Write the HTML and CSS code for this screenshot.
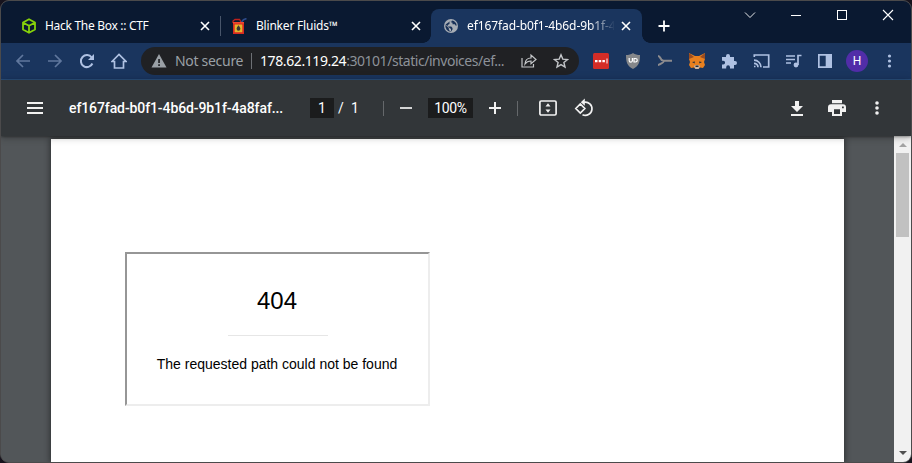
FILE: index.html
```html
<!DOCTYPE html>
<html lang="en">
<head>
<meta charset="utf-8">
<title>Browser window</title>
<link rel="stylesheet" href="styles.css">
</head>
<body>
<div class="window">
  <header class="tabs">
    <div class="tab tab-first">
      <svg class="favicon" viewBox="0 0 16 16" fill="none" stroke="#86d10a" stroke-width="1.8" stroke-linejoin="round"><path d="M8 1.2 14 4.5v7L8 14.8 2 11.500v-7zM2.300 4.700 8 7.800l5.700-3.100M8 7.800v6.700"/></svg>
      <span class="tab-title t-first">Hack The Box :: CTF</span>
      <svg class="close" viewBox="0 0 10 10"><path d="m1 1 8 8m0-8-8 8"/></svg>
    </div>
    <div class="tab tab-second">
      <svg class="favicon" viewBox="0 0 16 16"><path d="M2 5V3l2-1.500h4.500L10 4" fill="none" stroke="#bd211d" stroke-width="1.300"/><path d="m10.500 4 2-2.300 3-1.200" fill="none" stroke="#2d4c8c" stroke-width="1.600"/><path d="M2 4h11v12H2z" fill="#d82a20"/><path d="M2 4h11v1.500H2z" fill="#f04a30"/><path d="M3.700 6.500h7.600v7.700H3.700z" fill="#e3b52c"/><path d="M7.500 7.200c.9 1.300 1.900 2.300 1.900 3.600a1.900 1.900 0 0 1-3.800 0c0-1.300 1-2.300 1.900-3.600z" fill="#3b3834"/></svg>
      <span class="tab-title t-second">Blinker Fluids™</span>
      <svg class="close" viewBox="0 0 10 10"><path d="m1 1 8 8m0-8-8 8"/></svg>
    </div>
    <div class="tab tab-active">
      <svg class="favicon" viewBox="0 0 16 16"><circle cx="8" cy="8" r="7" fill="#a7adb5"/><path d="M8.500 2.300 6.500 4v2L4.700 7v1.500h3.500l1.300 1.400v1.600L8 13.700A5.700 5.700 0 0 1 2.400 7l3.400 3v1.500l1 1.500 1.200.2v-2.300L6 9.600 2.500 6.500M9 2.400 8 4.200l1.500.6v1.500h2.300l1 1.400.9-.3A5.800 5.800 0 0 0 9 2.400z" fill="#1a3258"/></svg>
      <span class="tab-title t-active">ef167fad-b0f1-4b6d-9b1f-4</span>
      <svg class="close" viewBox="0 0 10 10"><path d="m1 1 8 8m0-8-8 8"/></svg>
    </div>
    <svg class="new-tab" viewBox="0 0 12 12"><path d="M6 .5v11M.5 6h11" stroke="#fff" stroke-width="1.800"/></svg>
    <div class="controls">
      <svg viewBox="0 0 12 12" class="chevron"><path d="m1 3.500 5 5 5-5"/></svg>
      <svg viewBox="0 0 12 12" class="crisp"><path d="M1 6.500h10"/></svg>
      <svg viewBox="0 0 12 12" class="crisp"><path d="M1.500 1.500h9v9h-9z"/></svg>
      <svg viewBox="0 0 12 12"><path d="m1 1 10 10m0-10L1 11"/></svg>
    </div>
  </header>

  <nav class="toolbar">
    <div class="cell dim"><svg viewBox="0 0 16 16"><path d="M15 8H2m6-6L2 8l6 6" class="line"/></svg></div>
    <div class="cell dim"><svg viewBox="0 0 16 16"><path d="M1 8h13M8 2l6 6-6 6" class="line"/></svg></div>
    <div class="cell"><svg viewBox="0 0 16 16"><path d="M13.400 10.500a6 6 0 1 1-.7-6" class="line thick"/><path d="M15 1v6H9z" fill="currentColor"/></svg></div>
    <div class="cell"><svg viewBox="0 0 16 16"><path d="M1 8.500 8 1.500l7 7h-2.500V15h-9V8.500z" class="line"/></svg></div>
    <div class="omnibox">
      <svg class="warn" viewBox="0 0 16 14"><path fill="#9aa0a6" d="M8 0 15.500 13.500H.5z"/><path fill="#202124" d="M7.200 5h1.700v4H7.200zm0 5.200h1.700v1.700H7.200z"/></svg>
      <span class="insecure">Not secure</span>
      <i class="divider"></i>
      <span class="url"><b>178.62.119.24</b>:30101/static/invoices/ef...</span>
      <svg class="share" viewBox="0 0 16 16"><path d="M1 5v9h11.500v-3M4 11c.3-4 2.500-6 6-6V2l5 4.500-5 4.300V8c-2.600 0-4.500.8-6 3z"/></svg>
      <svg class="star" viewBox="0 0 16 16"><path d="m8 1.800 1.800 4.300 4.700.4-3.600 3 1.100 4.600L8 11.600l-4 2.500 1.100-4.600-3.600-3 4.700-.4z"/></svg>
    </div>
    <div class="cell"><svg viewBox="0 0 16 16"><path d="M1.500 0h13q1.500 0 1.500 1.500v13q0 1.500-1.500 1.500h-13Q0 16 0 14.500v-13Q0 0 1.500 0z" fill="#d32d27"/><path d="M2 7h2.500v2.300H2zm3.700 0h2.500v2.300H5.700zm3.700 0h2.500v2.300H9.400zM13.500 5.500h1v5h-1z" fill="#fff"/></svg></div>
    <div class="cell"><svg viewBox="0 0 16 16"><path d="M8 0c2 1.400 4.500 2 7 2 0 7-1 11-7 14C2 13 1 9 1 2c2.500 0 5-.6 7-2z" fill="#85878a"/><path d="M4.200 5v2.500a1.600 1.600 0 0 0 3.200 0V5M9 5.500h1.500a1.700 1.700 0 0 1 0 3.500H9z" fill="none" stroke="#fff" stroke-width="1.200"/></svg></div>
    <div class="cell"><svg viewBox="0 0 16 16"><path d="M1 3c3 0 2 4.500 5 4.500S3 12 1 12M6 7.700h9" fill="none" stroke="#8c8b8e" stroke-width="2"/></svg></div>
    <div class="cell"><svg viewBox="0 0 16 16"><path d="m0 0 6 3h4l6-3v6l-1 3 1 3-2 3-3-.5L9.500 16h-3L5 14.500 2 15l-2-3 1-3-1-3z" fill="#e8801f"/><path d="m0 0 5 4-5 2zM16 0l-5 4 5 2z" fill="#984c21"/><path d="m3 9 3-.5-.5 2zM13 9l-3-.5.500 2z" fill="#25303d"/><path d="m5 13 1.500-1h3l1.500 1-1.500 3h-3z" fill="#c9b9ac"/><path d="M6.500 12.500h3V14h-3z" fill="#262b33"/></svg></div>
    <div class="cell"><svg viewBox="0 0 16 16"><path fill="currentColor" d="M1 4h4V3a2 2 0 0 1 4 0v1h4v4h1a2 2 0 0 1 0 4h-1v3.500H9v-1.300a1.900 1.900 0 0 0-3.800 0v1.300H1v-4h1.200a1.900 1.900 0 0 0 0-3.800H1z"/></svg></div>
    <div class="cell"><svg class="wide" viewBox="0 0 17 16"><path d="M1.300 4V2h14.400v12H10M1 13.500h1.500M1 10.300a4 4 0 0 1 4 4M1 7.200a7 7 0 0 1 7 7" class="line"/></svg></div>
    <div class="cell"><svg class="wide" viewBox="0 0 17 16"><path d="M1 3h9M1 6.500h9M1 10h5M16.500 2.500H13V12" class="line"/><circle cx="11" cy="12" r="2.400" fill="currentColor"/></svg></div>
    <div class="cell"><svg viewBox="0 0 16 16"><path fill="currentColor" fill-rule="evenodd" d="M1 1h14v14H1zm1.700 1.700v10.600h6V2.700z"/></svg></div>
    <div class="cell"><span class="avatar">H</span></div>
    <div class="cell"><svg viewBox="0 0 16 16" fill="currentColor"><circle cx="8.500" cy="3" r="1.600"/><circle cx="8.500" cy="8" r="1.600"/><circle cx="8.500" cy="13" r="1.600"/></svg></div>
  </nav>

  <div class="pdfbar">
    <svg class="menu" viewBox="0 0 16 12"><path d="M0 0h16v2H0zm0 5h16v2H0zm0 5h16v2H0z"/></svg>
    <span class="doc">ef167fad-b0f1-4b6d-9b1f-4a8faf...</span>
    <span class="box page-no">1</span>
    <span class="slash">/</span>
    <span class="total">1</span>
    <i class="sep"></i>
    <svg class="minus" viewBox="0 0 12 12"><path d="M0 5h12v2H0z"/></svg>
    <span class="box zoom">100%</span>
    <svg class="plus" viewBox="0 0 12 12"><path d="M0 5h5V0h2v5h5v2H7v5H5V7H0z"/></svg>
    <i class="sep sep-two"></i>
    <svg class="fit" viewBox="0 0 20 16"><rect x="1.900" y="1" width="16.200" height="14" rx="1.300" fill="none" stroke="#f1f1f1" stroke-width="1.700"/><path d="m10 3.300 2.500 3.200h-5zm0 9.400 2.500-3.200h-5z"/></svg>
    <svg class="rotate" viewBox="0 0 20 20"><path d="M1.800 10.500 6.300 6l4.500 4.500L6.300 15zM10 4.300a6.600 6.600 0 1 1-1.500 12.400" fill="none" stroke="#f1f1f1" stroke-width="1.700"/><path d="M10.800.5v7.300L6.800 4.200z"/></svg>
    <svg class="download" viewBox="0 0 12 15"><path d="M4 0h4v5h4l-6 6-6-6h4zM0 13h12v2H0z"/></svg>
    <svg class="print" viewBox="0 0 18 16"><path fill-rule="evenodd" d="M4 0h10v3.300H4zM3 4.300h12q3 0 3 3V12h-4v4H4v-4H0V7.300q0-3 3-3zm3 5V14h6V9.300zM14 6.500v1.700h1.800V6.500z"/></svg>
    <svg class="more" viewBox="0 0 4 14"><circle cx="2" cy="2" r="1.800"/><circle cx="2" cy="7" r="1.800"/><circle cx="2" cy="12" r="1.800"/></svg>
  </div>

  <main class="viewer">
    <div class="paper">
      <section class="frame">
        <h1>404</h1>
        <hr>
        <p>The requested path could not be found</p>
      </section>
    </div>
    <div class="scrollbar">
      <svg class="up" viewBox="0 0 8 4"><path d="M4 0l4 4H0z"/></svg>
      <div class="thumb"></div>
      <svg class="down" viewBox="0 0 8 4"><path d="M0 0h8L4 4z"/></svg>
    </div>
  </main>
</div>
</body>
</html>
```
FILE: styles.css
```css
* { box-sizing: border-box; }
body { margin: 0; background: #17131d; overflow: hidden; font-family: "Noto Sans", sans-serif; }
svg { display: block; flex: none; }
.window {
  width: 912px; height: 463px; border: 1px solid #4b4a4b; border-radius: 9px;
  overflow: hidden; display: flex; flex-direction: column; background: #525659;
}

.tabs { height: 42px; flex: none; display: flex; background: #0a1931; padding-top: 8px; }
.tab { display: flex; align-items: center; height: 34px; color: #fff; flex: none; }
.tab-first { width: 220px; padding-left: 20px; }
.tab-first::after { content: ""; width: 1px; height: 20px; background: #48556a; margin-left: 10px; flex: none; }
.tab-second { width: 210px; padding: 0 10px; }
.tab-active { width: 211px; padding: 0 11px 0 12px; background: #1a355e; border-radius: 8px 8px 0 0; position: relative; }
.tab-active::before, .tab-active::after { content: ""; position: absolute; bottom: 0; width: 8px; height: 8px; }
.tab-active::before { left: -8px; background: radial-gradient(circle at 0 0, transparent 7.5px, #1a355e 8px); }
.tab-active::after { right: -8px; background: radial-gradient(circle at 100% 0, transparent 7.5px, #1a355e 8px); }
.favicon { width: 16px; height: 16px; }
.tab-title { font-size: 12px; line-height: 18px; margin-left: 8px; white-space: nowrap; flex: 1; }
.t-first { letter-spacing: -0.3px; }
.t-second { letter-spacing: -0.2px; margin-left: 9px; }
.t-active { flex: none; width: 147px; letter-spacing: -0.1px; -webkit-mask-image: linear-gradient(to right, #000 122px, transparent 148px); mask-image: linear-gradient(to right, #000 122px, transparent 148px); }
.close { width: 10px; height: 10px; stroke: #fff; stroke-width: 1.6; margin-left: auto; }
.new-tab { width: 12px; height: 12px; margin: 11px 0 0 16px; }
.controls { display: flex; gap: 34px; margin: 0 17px 0 auto; }
.controls svg { width: 12px; height: 12px; fill: none; stroke: #fff; stroke-width: 1.1; }
.controls .chevron { stroke-width: 0.9; }
.controls .crisp { shape-rendering: crispEdges; }

.toolbar { height: 37px; flex: none; display: flex; align-items: center; padding: 0 6px; background: #1a355e; border-bottom: 1px solid #2b4f7b; color: #afc1e2; }
.cell { width: 32px; height: 32px; flex: none; display: flex; align-items: center; justify-content: center; }
.cell svg { width: 16px; height: 16px; }
.cell svg.wide { width: 17px; }
.dim { color: #60779d; }
.line { fill: none; stroke: currentColor; stroke-width: 1.7; }
.thick { stroke-width: 2; }
.avatar { width: 22px; height: 22px; border-radius: 50%; background: #512da8; color: #fff; font: 12px/22px Roboto, sans-serif; text-align: center; }
.omnibox { width: 438px; height: 28px; margin: 0 6px; border-radius: 14px; background: #202124; display: flex; align-items: center; padding: 0 10px; font-size: 14px; line-height: 20px; color: #9aa0a6; flex: none; white-space: nowrap; }
.warn { width: 16px; height: 14px; }
.insecure { width: 68px; margin-left: 8px; letter-spacing: -0.3px; }
.divider { width: 1px; height: 16px; margin: 0 8px; background: #6d7075; }
.url { width: 246px; letter-spacing: -0.46px; color: #8d9299; }
.url b { font-weight: 400; color: #fff; letter-spacing: -0.4px; }
.share, .star { width: 16px; height: 16px; fill: none; stroke: #c3c5c8; stroke-width: 1.2; }
.share { margin-left: auto; }
.star { margin-left: 16px; stroke-width: 1.4; }

.pdfbar { height: 56px; flex: none; display: flex; align-items: center; background: #323639; color: #fff; font: 500 14px/20px Roboto, sans-serif; position: relative; box-shadow: 0 -2px 8px rgba(0,0,0,.09), 0 4px 8px rgba(0,0,0,.06), 0 1px 2px rgba(0,0,0,.3), 0 2px 6px rgba(0,0,0,.15); }
.pdfbar svg { fill: #f1f1f1; }
.menu { width: 16px; height: 12px; margin-left: 26px; }
.doc { width: 215px; margin-left: 26px; white-space: nowrap; letter-spacing: -0.1px; }
.box { background: #1b1c1d; height: 20px; text-align: center; }
.page-no { width: 24px; margin-left: 26px; }
.slash { width: 7px; margin-left: 4px; }
.total { width: 8px; margin-left: 6px; }
.page-no, .slash, .total, .zoom { font-weight: 400; }
.sep { width: 1px; height: 15px; margin-left: 24px; background: #65686b; }
.minus, .plus { width: 12px; height: 12px; }
.minus { margin-left: 16px; }
.pdfbar .minus { fill: #d4d5d5; }
.zoom { width: 45px; margin-left: 16px; font-size: 14px; letter-spacing: -0.3px; }
.plus { margin-left: 16px; }
.sep-two { margin-left: 16px; }
.fit { width: 20px; height: 16px; margin-left: 20px; }
.rotate { width: 20px; height: 20px; margin-left: 16px; }
.download { width: 12px; height: 15px; margin-left: auto; }
.print { width: 18px; height: 16px; margin-left: 25px; }
.more { width: 4px; height: 14px; margin: 0 32px 0 29px; }

.viewer { flex: 1; min-height: 0; display: flex; background: #525659; }
.paper { width: 793px; margin: 3px 0 0 50px; background: #fff; box-shadow: 0 0 6px 1px rgba(0,0,0,.45); padding: 113px 0 0 74px; }
.frame { width: 305px; height: 154px; border: 2px solid; border-color: #969696 #ededed #ededed #969696; font-family: "Liberation Sans", sans-serif; color: #000; text-align: center; padding: 33px 1px 0 0; }
.frame h1 { margin: 0; font-size: 24px; line-height: 28px; font-weight: 400; }
.frame hr { width: 100px; height: 1px; border: 0; margin: 20px 0 20px 101px; background: #e6e6e6; }
.frame p { margin: 0; font-size: 14px; line-height: 16px; }
.scrollbar { width: 17px; margin-left: auto; background: #f1f1f1; display: flex; flex-direction: column; align-items: center; }
.up, .down { width: 8px; height: 4px; }
.up { margin-top: 7px; fill: #a3a3a3; }
.thumb { width: 13px; height: 84px; margin-top: 6px; background: #c1c1c1; }
.down { margin: auto 0 7px; fill: #505050; }
```
